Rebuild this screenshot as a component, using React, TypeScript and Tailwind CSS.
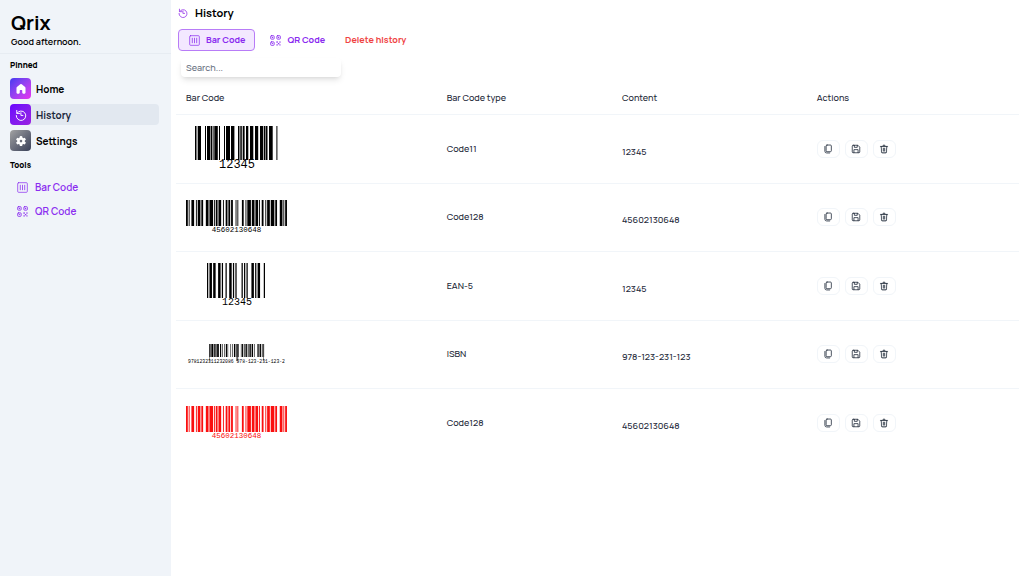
import type { ReactNode } from "react";

type IconProps = { className?: string };

function Stroke({ className, children }: IconProps & { children: ReactNode }) {
  return (
    <svg
      viewBox="0 0 24 24"
      className={className}
      fill="none"
      stroke="currentColor"
      strokeWidth="1.9"
      strokeLinecap="round"
      strokeLinejoin="round"
      aria-hidden="true"
    >
      {children}
    </svg>
  );
}

const HistoryIcon = ({ className }: IconProps) => (
  <Stroke className={className}>
    <path d="M3.5 2.8v6h6" />
    <path d="M4 8.3A9.500 9.500 0 1 1 2.500 13" />
    <path d="M11.800 7.500v5.400h4" />
  </Stroke>
);

const BarCodeIcon = ({ className }: IconProps) => (
  <Stroke className={className}>
    <rect x="1.500" y="1.500" width="21" height="21" rx="2" strokeWidth="1.600" />
    <path d="M7.200 7v10M12 7v10M16.800 7v10" strokeWidth="1.700" />
  </Stroke>
);

const QrCodeIcon = ({ className }: IconProps) => (
  <Stroke className={className}>
    <rect x="1.500" y="1.500" width="7.500" height="7.500" rx="1.500" />
    <rect x="15" y="1.500" width="7.500" height="7.500" rx="1.500" />
    <rect x="1.500" y="15" width="7.500" height="7.500" rx="1.500" />
    <path d="M5.200 5.200h.1M18.700 5.200h.1M5.200 18.700h.1" strokeWidth="2.400" />
    <path d="M15 15h1v1h-1zM21.500 15h.5v1h-.5zM18.300 18.300h1v1h-1zM15 21.500h1v.5h-1zM21.500 21.500h.5v.5h-.5z" strokeWidth="2.200" />
  </Stroke>
);

const HomeIcon = ({ className }: IconProps) => (
  <svg viewBox="0 0 24 24" className={className} fill="currentColor" aria-hidden="true">
    <path d="M13.45 2.53a2.25 2.25 0 0 0-2.9 0L3.8 8.23A2.25 2.25 0 0 0 3 9.94v9.8C3 20.7 3.78 21.5 4.75 21.5h3c.97 0 1.75-.8 1.75-1.76V15.2c0-.7.56-1.25 1.25-1.25h2.5c.69 0 1.25.56 1.25 1.25v4.54c0 .97.78 1.76 1.75 1.76h3c.97 0 1.75-.8 1.75-1.76v-9.8c0-.66-.3-1.29-.8-1.71l-6.75-5.7Z" />
  </svg>
);

const SettingsIcon = ({ className }: IconProps) => (
  <svg viewBox="0 0 24 24" className={className} fill="currentColor" fillRule="evenodd" aria-hidden="true">
    <path d="M9.7 2.3a10 10 0 0 1 4.6 0l.5 2.9 1.9 1.1 2.8-1a10 10 0 0 1 2.3 4l-2.2 1.8v2.2l2.2 1.8a10 10 0 0 1-2.3 4l-2.8-1-1.9 1.1-.5 2.7a10 10 0 0 1-4.6 0l-.5-2.7-1.9-1.1-2.8 1a10 10 0 0 1-2.3-4l2.2-1.8v-2.2L2.2 9.3a10 10 0 0 1 2.3-4l2.8 1 1.9-1.1zM12 9.6a2.6 2.6 0 1 0 0 5.2 2.6 2.6 0 0 0 0-5.2Z" />
  </svg>
);

const CopyIcon = ({ className }: IconProps) => (
  <Stroke className={className}>
    <rect x="7.500" y="2.500" width="12.500" height="16" rx="2.200" />
    <path d="M4.500 6v11.200a4.300 4.300 0 0 0 4.300 4.300H16" />
  </Stroke>
);

const SaveIcon = ({ className }: IconProps) => (
  <Stroke className={className}>
    <path d="M5.500 3h11l4.500 4.500v11.500a2 2 0 0 1-2 2h-14a2 2 0 0 1-2-2v-14a2 2 0 0 1 2-2Z" />
    <path d="M8 3.300V8h7V3.300M7 20.700v-7.200h10v7.200" />
  </Stroke>
);

const DeleteIcon = ({ className }: IconProps) => (
  <svg viewBox="0 0 24 24" className={className} fill="currentColor" stroke="currentColor" strokeWidth="0.4" aria-hidden="true">
    <path d="M12 1.75a3.25 3.25 0 0 1 3.245 3.066L15.25 5h5.25a.75.75 0 0 1 .102 1.493L20.5 6.5h-.796l-1.28 13.02a2.75 2.75 0 0 1-2.561 2.474l-.176.006H8.313a2.75 2.75 0 0 1-2.714-2.307l-.023-.174L4.295 6.5H3.5a.75.75 0 0 1-.743-.648L2.75 5.75a.75.75 0 0 1 .648-.743L3.5 5h5.25A3.25 3.25 0 0 1 12 1.75Zm6.197 4.75H5.802l1.267 12.872a1.25 1.25 0 0 0 1.117 1.122l.127.006h7.374c.6 0 1.109-.425 1.225-1.002l.02-.126L18.196 6.5ZM13.75 9.25a.75.75 0 0 1 .743.648L14.5 10v7a.75.75 0 0 1-1.493.102L13 17v-7a.75.75 0 0 1 .75-.75Zm-3.5 0a.75.75 0 0 1 .743.648L11 10v7a.75.75 0 0 1-1.493.102L9.5 17v-7a.75.75 0 0 1 .75-.75Zm1.75-6a1.75 1.75 0 0 0-1.744 1.606L10.25 5h3.5A1.75 1.75 0 0 0 12 3.25Z" />
  </svg>
);

// Alternating bar/space widths, one digit per element, starting with a bar.
const CODE128 =
  "211232" + "113123" + "314111" + "213212" + "212123" + "111422" + "114131" + "311222" + "113141" + "2331112";

function widthsToBars(widths: string) {
  const bars: [number, number][] = [];
  let x = 0;
  widths.split("").forEach((w, i) => {
    if (i % 2 === 0) bars.push([x, Number(w)]);
    x += Number(w);
  });
  return bars;
}

function modulesToBars(modules: string) {
  const bars: [number, number][] = [];
  for (const m of modules.matchAll(/1+/g)) bars.push([m.index ?? 0, m[0].length]);
  return bars;
}

const code128Bars = widthsToBars(CODE128);
const ean5Bars = modulesToBars("1011" + "0110011" + "01" + "0010011" + "01" + "0100001" + "01" + "0100011" + "01" + "0110001");
const ean13Bars = modulesToBars(
  "101" + "0111011" + "0110111" + "0011001" + "0010011" + "0100001" + "0010011" + "01010" +
    "1000010" + "1100110" + "1100110" + "1101100" + "1000010" + "1101100" + "101"
);

function Bars({ bars, x, y, unit, height }: { bars: [number, number][]; x: number; y: number; unit: number; height: number }) {
  return (
    <g>
      {bars.map(([start, width]) => (
        <rect key={start} x={x + start * unit} y={y} width={width * unit} height={height} />
      ))}
    </g>
  );
}

const label = "font-['Liberation_Mono',monospace]";

function Code11() {
  const bars: [number, number][] = [
    [0, 1], [1.5, 0.5], [2.7, 3.3], [10, 1], [12, 3.3], [15.8, 1.6], [18, 0.6], [19.3, 3.5], [24, 1], [29, 1], [31, 4], [36, 3.4],
    [43, 1.1], [44.6, 1.1], [46.2, 1.1], [48, 1.6], [51, 2.3], [55, 3.3], [60, 3.2], [65, 3.3], [69, 1.5], [71, 1.5], [74, 3.7], [81.4, 1],
  ];
  return (
    <svg viewBox="0 0 101 48" className="w-full" role="img" aria-label="Bar code 12345">
      <Bars bars={bars} x={9} y={1} unit={1} height={34} />
      <text x="51" y="43" fontSize="12" textAnchor="middle" className={label}>12345</text>
    </svg>
  );
}

function Code128() {
  return (
    <svg viewBox="0 0 202 70" className="w-full" fill="currentColor" role="img" aria-label="Bar code 45602130648">
      <Bars bars={code128Bars} x={0} y={0} unit={1.803} height={52} />
      <text x="101" y="63" fontSize="15" textAnchor="middle" className={label}>45602130648</text>
    </svg>
  );
}

function Ean5() {
  return (
    <svg viewBox="0 0 101 48" className="w-full" role="img" aria-label="Bar code 12345">
      <Bars bars={ean5Bars} x={21} y={1} unit={1.234} height={35} />
      <text x="51" y="43" fontSize="10" textAnchor="middle" className={label}>12345</text>
    </svg>
  );
}

function Isbn() {
  return (
    <svg viewBox="0 0 404 84" className="w-full" role="img" aria-label="Bar code 978-123-231-123-2">
      <Bars bars={ean13Bars} x={92} y={0} unit={2.32} height={52} />
      <path d="M92 0h3v68h-3zM201 0h8v68h-8zM309 0h3v68h-3z" opacity="0.6" />
      <text x="202" y="77" fontSize="19" textAnchor="middle" className={label}>9781232311232086 978-123-231-123-2</text>
    </svg>
  );
}

const rows: { code: ReactNode; type: string; content: string; tone: string }[] = [
  { code: <Code11 />, type: "Code11", content: "12345", tone: "text-black" },
  { code: <Code128 />, type: "Code128", content: "45602130648", tone: "text-black" },
  { code: <Ean5 />, type: "EAN-5", content: "12345", tone: "text-black" },
  { code: <Isbn />, type: "ISBN", content: "978-123-231-123", tone: "text-black" },
  { code: <Code128 />, type: "Code128", content: "45602130648", tone: "text-[#fa0f0f]" },
];

const actions = [
  { name: "Copy", Icon: CopyIcon },
  { name: "Save", Icon: SaveIcon },
  { name: "Delete", Icon: DeleteIcon },
];

const pinned = [
  { name: "Home", Icon: HomeIcon, tile: "bg-linear-to-br from-[#4338f0] to-[#e82cf0]", item: "" },
  { name: "History", Icon: HistoryIcon, tile: "bg-linear-to-br from-[#6a00ff] to-[#9a1fe0]", item: "bg-slate-200 text-slate-800" },
  { name: "Settings", Icon: SettingsIcon, tile: "bg-linear-to-br from-[#a3a3a3] to-[#3a4058]", item: "" },
];

function Sidebar() {
  return (
    <aside className="w-[171px] shrink-0 bg-[#f0f4f9] text-black">
      <header className="border-b border-slate-200/70 px-[11px] pt-[9px] pb-[5px]">
        <h1 className="text-[20px] leading-[27px] font-bold">Qrix</h1>
        <p className="text-[9px] leading-3 font-semibold">Good afternoon.</p>
      </header>
      <nav className="pr-3 pl-[10px]">
        <h2 className="pt-[5px] text-[8px] leading-3 font-extrabold">Pinned</h2>
        <ul className="mt-[7px] flex flex-col gap-[5px]">
          {pinned.map(({ name, Icon, tile, item }) => (
            <li key={name}>
              <a href="#" className={`flex items-center gap-[5px] rounded text-[10px] leading-3 font-bold ${item}`}>
                <span className={`flex size-[21px] items-center justify-center rounded text-white ${tile}`}>
                  <Icon className="size-3" />
                </span>
                {name}
              </a>
            </li>
          ))}
        </ul>
        <h2 className="mt-2 text-[8px] leading-3 font-extrabold">Tools</h2>
        <ul className="mt-1 text-[10px] leading-3 font-semibold text-[#8b2cf0]">
          <li>
            <a href="#" className="flex h-6 items-center gap-[7px] pl-[7px]">
              <BarCodeIcon className="size-[11px]" />
              Bar Code
            </a>
          </li>
          <li>
            <a href="#" className="flex h-6 items-center gap-[7px] pl-[7px]">
              <QrCodeIcon className="size-[11px]" />
              QR Code
            </a>
          </li>
        </ul>
      </nav>
    </aside>
  );
}

export default function App() {
  return (
    <div className="flex min-h-screen bg-white font-['Manrope','Inter',sans-serif] text-[9px] leading-3 font-medium text-gray-800">
      <Sidebar />
      <main className="min-w-0 flex-1 px-[5px]">
        <div className="flex items-center gap-[7px] pt-[5px] pl-[2px]">
          <HistoryIcon className="size-[10px] text-[#9333ea]" />
          <h2 className="text-[11px] leading-[15px] font-bold text-black">History</h2>
        </div>
        <div className="mt-[9px] flex items-center pl-[2px] text-[9px] font-bold text-[#8b2cf0]">
          <button type="button" className="flex h-[22px] items-center gap-[6px] rounded border border-[#b87cf7] bg-[#f3e8ff] pr-[9px] pl-[10px]">
            <BarCodeIcon className="size-[11px]" />
            Bar Code
          </button>
          <button type="button" className="ml-[15px] flex h-[22px] items-center gap-[6px]">
            <QrCodeIcon className="size-[11px]" />
            QR Code
          </button>
          <button type="button" className="ml-5 h-[22px] text-[#ef4444]">Delete history</button>
        </div>
        <input
          type="text"
          aria-label="Search"
          placeholder="Search..."
          className="mt-[7px] ml-[5px] block h-[19px] w-40 rounded bg-white px-[5px] shadow-md shadow-black/10 placeholder:text-gray-500"
        />
        <table className="mt-[5px] w-full table-fixed border-separate border-spacing-0 text-left">
          <colgroup>
            <col className="w-[30.8%]" />
            <col className="w-[20.8%]" />
            <col className="w-[23.1%]" />
            <col className="w-[25.3%]" />
          </colgroup>
          <thead>
            <tr className="h-[33px]">
              <th className="border-b border-slate-100 px-[10px] font-medium">Bar Code</th>
              <th className="border-b border-slate-100 px-[11px] font-medium">Bar Code type</th>
              <th className="border-b border-slate-100 px-[11px] font-medium">Content</th>
              <th className="border-b border-slate-100 px-[11px] font-medium">Actions</th>
            </tr>
          </thead>
          <tbody className="[&>tr:not(:last-child)>td]:border-b">
            {rows.map((row, i) => (
              <tr key={i} className="h-[68px] odd:h-[69px] last:h-[67px]">
                <td className="border-slate-100 px-[10px] pb-px">
                  <div className={`w-[101px] fill-current ${row.tone}`}>{row.code}</div>
                </td>
                <td className="border-slate-100 px-[11px] pb-px">{row.type}</td>
                <td className="border-slate-100 px-[11px] pt-[6px] pb-px">{row.content}</td>
                <td className="border-slate-100 px-[11px] pb-px">
                  <div className="flex gap-[5px]">
                    {actions.map(({ name, Icon }) => (
                      <button
                        key={name}
                        type="button"
                        aria-label={name}
                        className="flex h-[18px] w-[23px] items-center justify-center rounded-md border border-slate-100"
                      >
                        <Icon className="size-[10px]" />
                      </button>
                    ))}
                  </div>
                </td>
              </tr>
            ))}
          </tbody>
        </table>
      </main>
    </div>
  );
}
